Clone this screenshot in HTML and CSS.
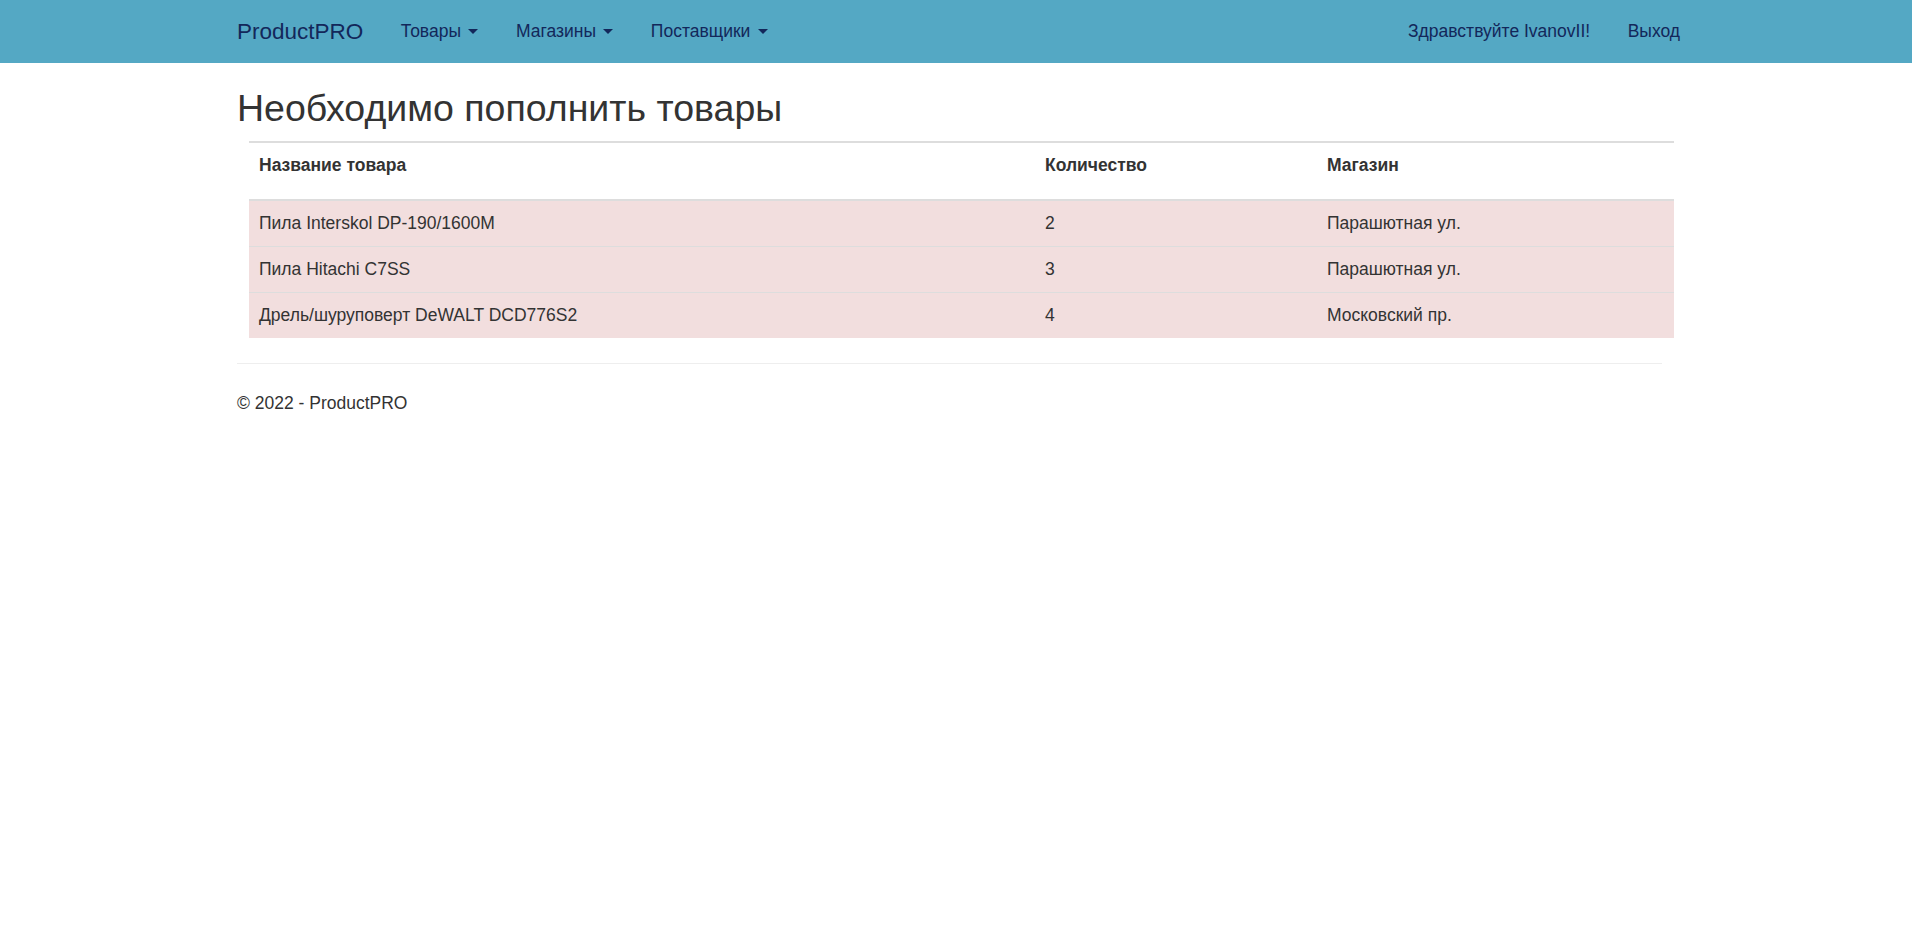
FILE: index.html
```html
<!DOCTYPE html>
<html lang="ru">
<head>
<meta charset="utf-8">
<title>ProductPRO</title>
<link rel="stylesheet" href="styles.css">
</head>
<body>
<header class="navbar">
  <div class="nav-inner">
    <a class="brand" href="#">ProductPRO</a>
    <ul class="nav">
      <li><a href="#">Товары <span class="caret"></span></a></li>
      <li><a href="#">Магазины <span class="caret"></span></a></li>
      <li><a href="#">Поставщики <span class="caret"></span></a></li>
    </ul>
    <ul class="nav nav-right">
      <li><a href="#">Здравствуйте IvanovII!</a></li>
      <li><a href="#">Выход</a></li>
    </ul>
  </div>
</header>
<main class="body-content">
  <h2 class="title">Необходимо пополнить товары</h2>
  <table class="table">
    <thead>
      <tr>
        <th class="col-name">Название товара</th>
        <th class="col-qty">Количество</th>
        <th class="col-shop">Магазин</th>
      </tr>
    </thead>
    <tbody>
      <tr class="danger">
        <td>Пила Interskol DP-190/1600M</td>
        <td>2</td>
        <td>Парашютная ул.</td>
      </tr>
      <tr class="danger">
        <td>Пила Hitachi C7SS</td>
        <td>3</td>
        <td>Парашютная ул.</td>
      </tr>
      <tr class="danger">
        <td>Дрель/шуруповерт DeWALT DCD776S2</td>
        <td>4</td>
        <td>Московский пр.</td>
      </tr>
    </tbody>
  </table>
  <hr class="rule">
  <footer class="footer">
    <p>&copy; 2022 - ProductPRO</p>
  </footer>
</main>
</body>
</html>
```

FILE: styles.css
```css
html, body {
  margin: 0;
  padding: 0;
}
body {
  font-family: "Liberation Sans", Arial, sans-serif;
  font-size: 17.5px;
  line-height: 25px;
  color: #333333;
  background: #ffffff;
}
a {
  text-decoration: none;
}
.navbar {
  height: 62.5px;
  background: #54a8c4;
}
.nav-inner {
  margin-left: 237px;
  width: 1443px;
  height: 100%;
  display: flex;
  align-items: center;
}
.brand {
  font-size: 22.5px;
  line-height: 25px;
  color: #13275a;
  padding-right: 18.75px;
}
.nav {
  list-style: none;
  margin: 0;
  padding: 0;
  display: flex;
}
.nav a {
  display: flex;
  align-items: center;
  padding: 0 18.75px;
  color: #13275a;
  line-height: 25px;
  white-space: pre;
}
.nav-right {
  margin-left: auto;
  margin-right: -18.75px;
}
.caret {
  display: inline-block;
  width: 0;
  height: 0;
  margin-left: 2.5px;
  border-top: 5px solid #13275a;
  border-left: 5px solid transparent;
  border-right: 5px solid transparent;
}
.body-content {
  margin-left: 237px;
  width: 1425px;
}
.title {
  font-size: 37.5px;
  font-weight: 500;
  line-height: 41.25px;
  margin: 25px 0 12.5px;
  color: #333333;
}
.table {
  width: 1425px;
  margin: 0 0 25px 12px;
  border-collapse: collapse;
  border-spacing: 0;
}
.table th {
  text-align: left;
  font-weight: bold;
  padding: 10px 10px 21px;
  border-top: 2px solid #dddddd;
  border-bottom: 2px solid #dddddd;
  vertical-align: top;
}
.col-name { width: 766px; }
.col-qty { width: 262px; }
.table td {
  padding: 10px;
  border-top: 1px solid #dddddd;
  vertical-align: top;
}
.danger td {
  background: #f2dede;
}
.rule {
  margin: 0;
  border: 0;
  border-top: 1px solid #eeeeee;
}
.footer p {
  margin: 26.5px 0 12.5px;
}
```
